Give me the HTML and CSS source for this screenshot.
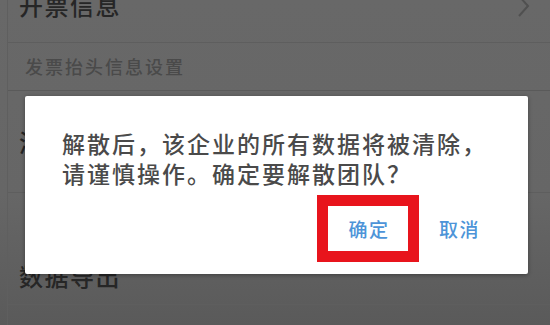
FILE: index.html
```html
<!DOCTYPE html>
<html lang="zh-CN">
<head>
<meta charset="utf-8">
<title>解散团队</title>
<link rel="stylesheet" href="styles.css">
</head>
<body>
<div class="screen">
  <div class="page">
    <div class="row row-first">
      <span class="label">开票信息</span>
      <svg class="chev" width="14" height="22" viewBox="0 0 14 22"><polyline points="2,-2 11,8 2,18" fill="none" stroke="#505050" stroke-width="2"/></svg>
    </div>
    <div class="section">发票抬头信息设置</div>
    <div class="row row-tall"><span class="label">添加抬头</span></div>
    <div class="row row-low"><span class="label">数据导出</span></div>
  </div>
  <div class="dialog">
    <p class="msg">解散后，该企业的所有数据将被清除，<br>请谨慎操作。确定要解散团队？</p>
    <div class="actions">
      <span class="btn btn-ok">确定</span>
      <span class="btn btn-cancel">取消</span>
    </div>
  </div>
</div>
</body>
</html>
```

FILE: styles.css
```css
html, body {
  margin: 0;
  padding: 0;
}
body {
  width: 550px;
  height: 325px;
  overflow: hidden;
  font-family: "Noto Sans CJK SC", "Noto Sans", sans-serif;
  background: linear-gradient(to bottom, #686868 0%, #666666 60%, #5a5a5a 100%);
}
.screen {
  position: relative;
  width: 550px;
  height: 325px;
  overflow: hidden;
}
.page {
  margin-top: -10px;
  margin-left: 7px;
  border-left: 1px solid #5f5f5f;
  height: 340px;
}
.row {
  display: flex;
  justify-content: space-between;
  align-items: center;
  padding-left: 11px;
  padding-right: 16px;
  border-bottom: 1px solid #5e5e5e;
  box-sizing: border-box;
}
.label {
  font-size: 24px;
  line-height: 30px;
  letter-spacing: 1.5px;
  font-weight: 500;
  color: #262626;
  white-space: nowrap;
}
.row-first {
  height: 53px;
  align-items: flex-start;
}
.chev {
  margin-top: 8px;
  margin-right: 3px;
}
.section {
  height: 48px;
  box-sizing: border-box;
  padding-left: 17px;
  padding-top: 9px;
  font-size: 18px;
  line-height: 28px;
  letter-spacing: 2px;
  font-weight: 500;
  color: #4a4a4a;
  border-bottom: 1px solid #5a5a5a;
}
.row-tall {
  height: 102px;
}
.row-low {
  height: 112px;
  align-items: flex-end;
  padding-bottom: 13px;
}
.dialog {
  position: absolute;
  left: 25px;
  top: 96px;
  width: 503px;
  box-sizing: border-box;
  background: #ffffff;
  border-radius: 2px;
  box-shadow: 0 1px 4px rgba(0, 0, 0, 0.35);
  padding: 32px 40px 12px 37px;
}
.msg {
  margin: 0;
  font-size: 23px;
  line-height: 30px;
  letter-spacing: 2px;
  font-weight: 500;
  color: #4a4a4a;
  white-space: nowrap;
}
.actions {
  display: flex;
  justify-content: flex-end;
  align-items: center;
  margin-top: 7px;
  padding-right: 8px;
}
.btn {
  font-size: 19px;
  line-height: 24px;
  letter-spacing: 1.5px;
  font-weight: 500;
  color: #4d94d8;
  white-space: nowrap;
}
.btn-ok {
  border: 11px solid #e8141c;
  width: 78px;
  height: 45px;
  box-sizing: content-box;
  display: flex;
  align-items: center;
  justify-content: center;
  padding-left: 2px;
}
.btn-cancel {
  margin-left: 20px;
}
```
